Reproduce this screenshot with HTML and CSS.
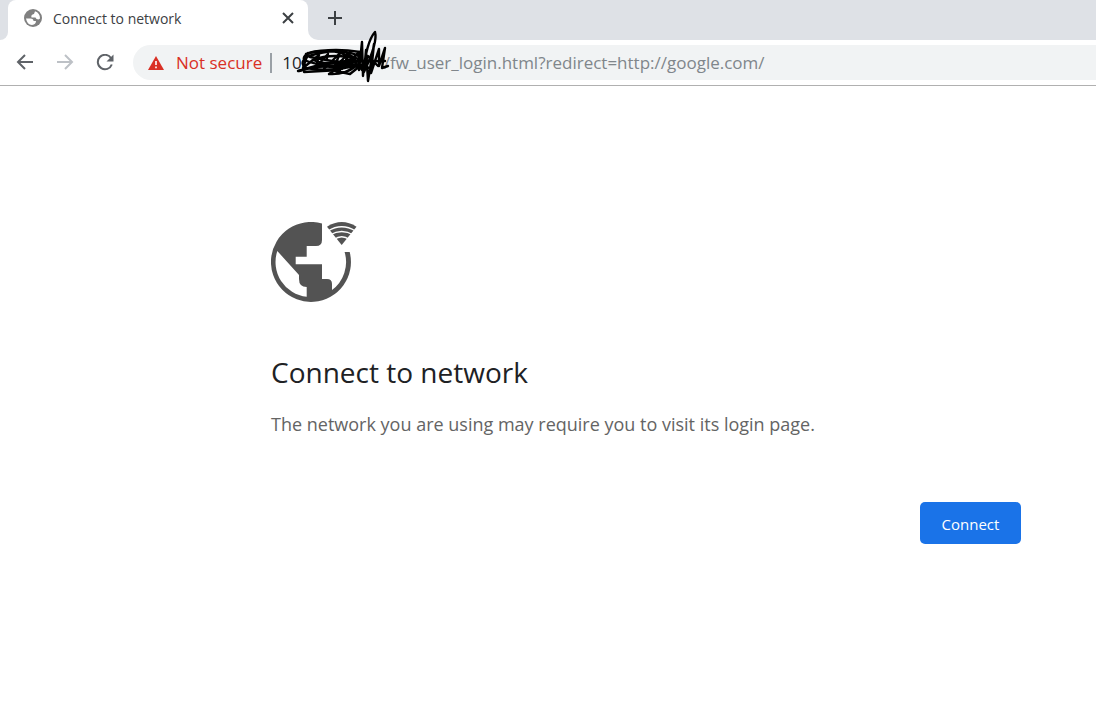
FILE: index.html
```html
<!DOCTYPE html>
<html lang="en">

<head>
    <meta charset="UTF-8">
    <meta name="viewport" content="width=device-width, initial-scale=1.0">
    <title>Connect to network</title>
    <link rel="stylesheet" href="styles.css">
</head>

<body>
    <header class="browser">
        <div class="tabs">
            <div class="before"></div>
            <div class="tab">
                <svg class="favicon" width="18" height="18" viewBox="0 0 18 18">
                    <circle cx="9" cy="9" r="9" fill="#808080" />
                    <path d="M2 9.500 H6.500 Q9.500 9.500 9.500 12 H12 Q12 15.500 8 16 Q3 15.500 2 9.500Z M11 2.300 Q16 4 16 9.500 L14.500 10.500 Q12 10.500 11.500 8.500 H7.500 Q6.500 5.500 10 5Z" fill="#fff" />
                </svg>
                <span class="tab-title">Connect to network</span>
                <button class="icon-button close" aria-label="Close tab">
                    <svg width="12" height="12" viewBox="0 0 12 12"><path d="M1 1 L11 11 M11 1 L1 11" /></svg>
                </button>
            </div>
            <div class="after">
                <button class="icon-button" aria-label="New tab">
                    <svg width="16" height="16" viewBox="0 0 16 16"><path d="M8 1 V15 M1 8 H15" /></svg>
                </button>
            </div>
        </div>
        <nav class="toolbar">
            <button class="icon-button" aria-label="Back">
                <svg width="18" height="18" viewBox="0 0 18 18"><path d="M17 8 H2 M9 1 L2 8 L9 15" /></svg>
            </button>
            <button class="icon-button" aria-label="Forward" disabled>
                <svg width="18" height="18" viewBox="0 0 18 18"><path d="M1 8 H16 M9 1 L16 8 L9 15" /></svg>
            </button>
            <button class="icon-button" aria-label="Reload">
                <svg width="18" height="18" viewBox="0 0 18 18">
                    <path d="M15 4 A7.200 7.200 0 1 0 15.800 10.500" />
                    <path class="solid" d="M17.500 0.500 V7.500 H10.500Z" />
                </svg>
            </button>
            <div class="address">
                <svg class="warning" width="16" height="14" viewBox="0 0 16 14">
                    <path d="M8 0 L16 14 H0Z" fill="#d93025" />
                    <path d="M8 5 V9 M8 10.500 V12.300" stroke="#fff" stroke-width="1.600" />
                </svg>
                <span class="not-secure">Not secure</span>
                <span class="divider"></span>
                <span class="host">10</span>
                <!-- host is scribbled out -->
                <span class="hidden-host">
                    <svg class="scribble" width="104" height="56" viewBox="290 28 104 56">
                        <path d="M299 71 Q318 65 334 67 Q355 68 352 60 Q344 50 319 51 Q302 53 304 60 Q320 67 344 65 Q365 61 357 55 Q336 47 309 56 Q298 62 306 68 Q325 72 350 67 Q364 62 348 57 Q328 54 313 60 Q327 66 350 60 L329 74 Q345 75 356 66 L331 70 L350 74 L365 62 L347 54 L345 68 L359 52 V70 L362 42 L363 76 Q366 42 375 32 Q378 42 364 72 L366 50 L368 81 L374 44 L371 73 L379 49 V66 L385 48 L382 68 L388 66" />
                        <path d="M308 53 L303 68 L319 55 L316 67 L328 54 L324 69 L340 53 L334 68 L350 52 L342 69 L357 54 M298 71 L330 62 L385 61 M310 57 L370 68 M304 72 L340 70 M350 56 L362 70 L368 56 L378 66 M306 54 Q330 47 360 52" />
                    </svg>
                </span>
                <span class="path">/fw_user_login.html?redirect=http://google.com/</span>
            </div>
        </nav>
    </header>

    <main class="content">
        <svg class="globe" width="86" height="80" viewBox="0 0 86 80">
            <path fill-rule="evenodd" d="M51 1.500 A40 40 0 1 0 78.700 30 H73.600 A35 35 0 0 1 61 68.100 V62 Q61 57 56 57 H51 V42.300 H24.700 V34.700 H35.700 V24 H45 Q51 24 51 18Z M6.300 29 L28 53 V57 Q28 65 35.700 65 V74.800 A35 35 0 0 1 6.300 29Z" />
            <path d="M70.700 23 L56 4.700 Q70.700 -4.500 85.500 4.700Z" />
            <path class="gap" d="M57 9 Q70.700 0.500 84.500 9 M59 13 Q70.700 6 82.500 13 M63 17.500 Q70.700 12 78.500 17.500" />
        </svg>
        <h1>Connect to network</h1>
        <p>The network you are using may require you to visit its login page.</p>
        <div class="actions">
            <button class="connect">Connect</button>
        </div>
    </main>
</body>

</html>
```
FILE: styles.css
```css
body {
    margin: 0;
    background-color: #fff;
    color: #202124;
    font-family: "Open Sans", "Noto Sans", sans-serif;
}

button {
    font-family: inherit;
    border: 0;
    padding: 0;
    cursor: pointer;
}

.browser {
    border-bottom: 1px solid #b0b0b0;
}

.tabs {
    display: flex;
    height: 40px;
    background-color: #fff;
}

.before,
.after {
    background-color: #dee1e6;
}

.before {
    width: 8px;
    border-bottom-right-radius: 8px;
}

.after {
    flex: 1;
    display: flex;
    align-items: center;
    padding: 0 0 4px 19px;
    border-bottom-left-radius: 10px;
}

.tab {
    display: flex;
    align-items: center;
    box-sizing: border-box;
    width: 300px;
    padding: 0 14px 4px 16px;
    background: linear-gradient(#dee1e6, #dee1e6) top / 100% 10px no-repeat;
    position: relative;
    z-index: 0;
}

.tab::before {
    content: "";
    position: absolute;
    inset: 0;
    z-index: -1;
    background-color: #fff;
    border-radius: 8px 8px 0 0;
}

.tab-title {
    flex: 1;
    margin-left: 11px;
    font-size: 14px;
    color: #3c4043;
}

.icon-button {
    display: flex;
    background: none;
}

.icon-button svg {
    fill: none;
    stroke: #5f6368;
    stroke-width: 2;
}

.tabs .icon-button svg {
    stroke: #3c4043;
}

.icon-button .solid {
    fill: #5f6368;
    stroke: none;
}

.icon-button:disabled svg {
    stroke: #bdc1c6;
}

.toolbar {
    display: flex;
    align-items: center;
    gap: 22px;
    height: 45px;
    padding-left: 16px;
}

.address {
    flex: 1;
    display: flex;
    align-items: center;
    height: 35px;
    margin-left: -3px;
    padding-left: 15px;
    background-color: #f1f3f4;
    border-radius: 18px 0 0 18px;
    font-size: 17px;
    white-space: nowrap;
}

.not-secure {
    margin-left: 12px;
    color: #d93025;
}

.divider {
    width: 2px;
    height: 20px;
    margin: 0 10px 0 8px;
    background-color: #9aa0a6;
}

.hidden-host {
    position: relative;
    width: 82px;
    height: 20px;
}

.scribble {
    position: absolute;
    left: -12px;
    top: -25px;
    fill: none;
    stroke: #000;
    stroke-width: 2.4;
    stroke-linejoin: round;
    stroke-linecap: round;
}

.path {
    color: #80868b;
}

.content {
    max-width: 750px;
    padding: 136px 75px 0 271px;
}

.globe {
    display: block;
    fill: #535353;
}

.globe .gap {
    fill: none;
    stroke: #fff;
    stroke-width: 1.3;
}

h1 {
    margin: 50px 0 16px;
    font-size: 28px;
    line-height: 40px;
    font-weight: 400;
}

p {
    margin: 0;
    font-size: 18px;
    line-height: 32px;
    color: #646464;
}

.actions {
    display: flex;
    justify-content: flex-end;
    margin-top: 62px;
}

.connect {
    width: 101px;
    height: 42px;
    padding-top: 2px;
    border-radius: 5px;
    background-color: #1a73e8;
    color: #fff;
    font-size: 15px;
}
```
